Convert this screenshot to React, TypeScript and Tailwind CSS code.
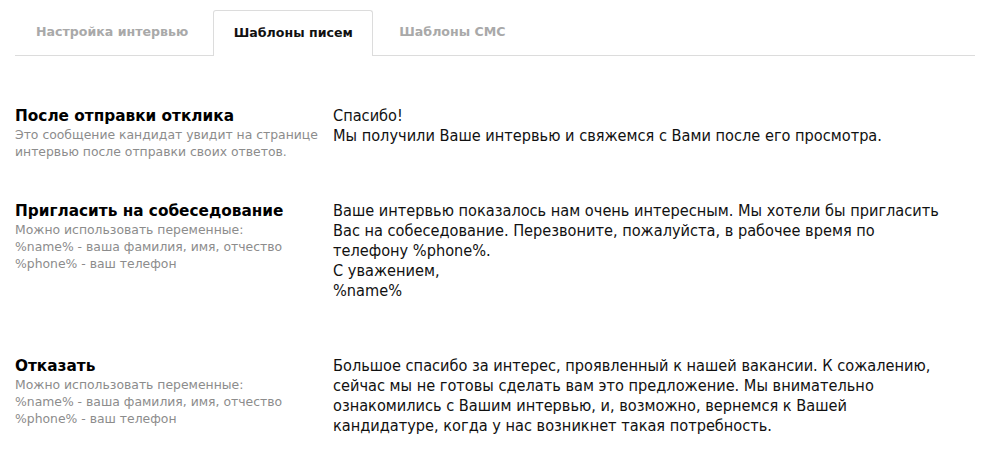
import React from "react";

const tabs = [
  { id: "interview", label: "Настройка интервью" },
  { id: "letters", label: "Шаблоны писем" },
  { id: "sms", label: "Шаблоны СМС" },
];

const vars = [
  "Можно использовать переменные:",
  "%name% - ваша фамилия, имя, отчество",
  "%phone% - ваш телефон",
];

const templates = [
  {
    title: "После отправки отклика",
    hint: ["Это сообщение кандидат увидит на странице", "интервью после отправки своих ответов."],
    body: ["Спасибо!", "Мы получили Ваше интервью и свяжемся с Вами после его просмотра."],
    gap: "mb-[41px]",
  },
  {
    title: "Пригласить на собеседование",
    hint: vars,
    body: [
      "Ваше интервью показалось нам очень интересным. Мы хотели бы пригласить",
      "Вас на собеседование. Перезвоните, пожалуйста, в рабочее время по",
      "телефону %phone%.",
      "С уважением,",
      "%name%",
    ],
    gap: "mb-[55px]",
  },
  {
    title: "Отказать",
    hint: vars,
    body: [
      "Большое спасибо за интерес, проявленный к нашей вакансии. К сожалению,",
      "сейчас мы не готовы сделать вам это предложение. Мы внимательно",
      "ознакомились с Вашим интервью, и, возможно, вернемся к Вашей",
      "кандидатуре, когда у нас возникнет такая потребность.",
    ],
    gap: "",
  },
];

export default function App() {
  const active = "letters";

  return (
    <div className="h-[451px] w-[986px] overflow-hidden bg-white px-[15px] pt-[10px] font-['DejaVu_Sans',sans-serif]">
      <div className="flex w-[960px] border-b border-[#dcdcdc] pl-[21px]">
        {tabs.map((tab, i) =>
          tab.id === active ? (
            <div
              key={tab.id}
              className="-mb-px flex h-[46px] w-[160px] items-center justify-center rounded-t-[3px] border border-b-0 border-[#dcdcdc] bg-white text-[12.6px] font-bold text-[#111]"
            >
              {tab.label}
            </div>
          ) : (
            <div
              key={tab.id}
              className={`flex h-[45px] items-center text-[12.6px] font-bold text-[#a9a9a9] ${
                i === 0 ? "pr-[25px]" : "pl-[26px]"
              }`}
            >
              {tab.label}
            </div>
          )
        )}
      </div>

      <div className="mt-[50px]">
        {templates.map((t) => (
          <div key={t.title} className={`flex ${t.gap}`}>
            <div className="w-[318px] shrink-0 whitespace-nowrap">
              <h3 className="text-[15.3px] leading-[20px] font-bold text-black">{t.title}</h3>
              <p className="text-[12.4px] leading-[17px] text-[#8c8c8c]">
                {t.hint.map((line) => (
                  <span key={line} className="block">
                    {line}
                  </span>
                ))}
              </p>
            </div>
            <div className="font-['DejaVu_Sans_Condensed','DejaVu_Sans',sans-serif] text-[16.2px] leading-[20px] text-[#111]">
              {t.body.map((line, i) => (
                <div key={i}>{line}</div>
              ))}
            </div>
          </div>
        ))}
      </div>
    </div>
  );
}
